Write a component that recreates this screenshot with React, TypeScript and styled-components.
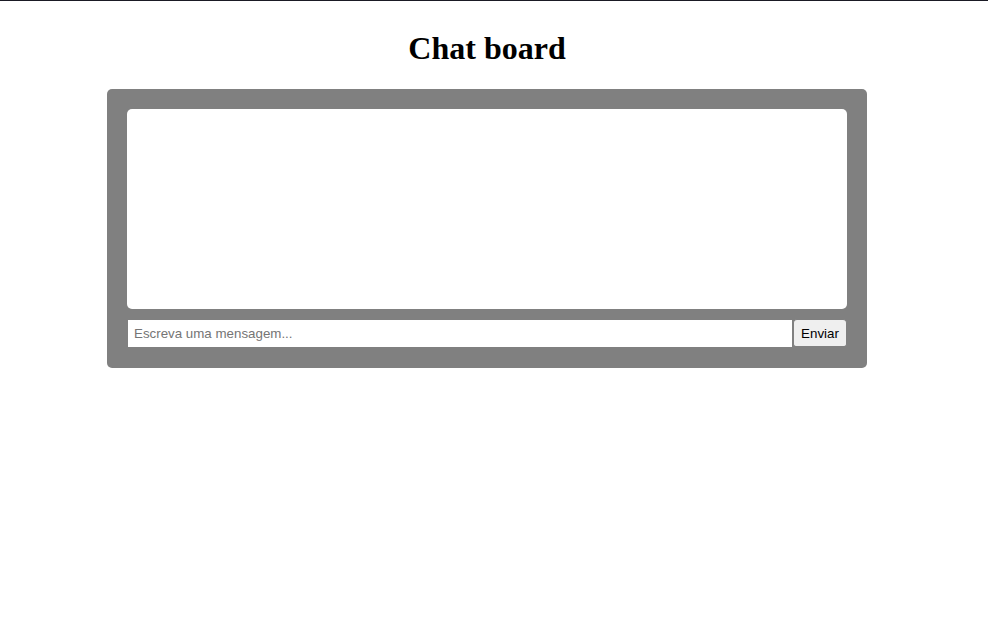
import { useState } from "react"
import styled, { createGlobalStyle } from "styled-components"

const Global = createGlobalStyle`
html {
    border-top: 1px solid #1a1a24;
}
body {
    margin: 8px 22px 8px 8px;
    background: #fff;
    font-family: "Liberation Serif", serif;
}
#root {
    display: flow-root;
}
`

const Title = styled.h1`
margin: 21.44px 0;
font-size: 32px;
line-height: 37px;
font-weight: bold;
text-align: center;
color: #000;
`

const Board = styled.div`
width: 720px;
margin: 0 auto;
padding: 20px;
background: #808080;
border-radius: 5px;
`

const Messages = styled.div`
height: 200px;
background: #fff;
border-radius: 5px;
overflow-y: auto;
`

const Form = styled.form`
display: flex;
margin-top: 10px;
height: 29px;
`

const Input = styled.input`
flex: 1;
box-sizing: border-box;
height: 29px;
margin: 0;
padding: 0 6px;
border: 1px solid #808080;
border-radius: 0;
background: #fff;
font-family: "Liberation Sans", Arial, sans-serif;
font-size: 13.33px;
color: #000;
outline: none;

&::placeholder {
    color: #757575;
}
`

const Button = styled.button`
box-sizing: border-box;
width: 54px;
height: 29px;
margin: 0;
padding: 1px 7px 0;
border: 1px solid #808080;
border-bottom-width: 2px;
border-radius: 4px;
background: #efefef;
font-family: "Liberation Sans", Arial, sans-serif;
font-size: 13.33px;
color: #000;
`

export default function App() {
    const [text, setText] = useState("")

    return (
        <>
            <Global />
            <Title>Chat board</Title>
            <Board>
                <Messages />
                <Form onSubmit={e => { e.preventDefault(); setText("") }}>
                    <Input
                        value={text}
                        onChange={e => setText(e.target.value)}
                        placeholder="Escreva uma mensagem..."
                    />
                    <Button type="submit">Enviar</Button>
                </Form>
            </Board>
        </>
    )
}
